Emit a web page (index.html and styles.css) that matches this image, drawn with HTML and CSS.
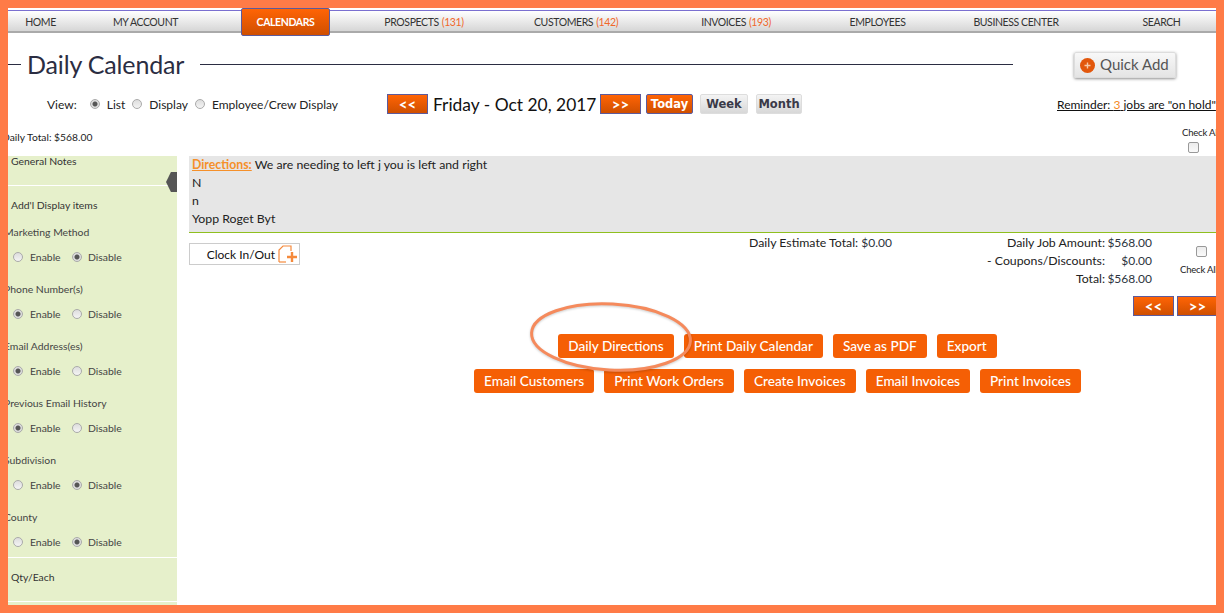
FILE: index.html
```html
<!DOCTYPE html>
<html lang="en">
<head>
    <meta charset="UTF-8">
    <title>Daily Calendar</title>
    <link rel="stylesheet" href="styles.css">
</head>
<body>
    <div class="frame">
        <div class="nav">
            <div class="nav-bar">
                <a class="nav-item">HOME</a>
                <a class="nav-item">MY ACCOUNT</a>
                <a class="nav-item nav-active"><span class="nav-tab">CALENDARS</span></a>
                <a class="nav-item">PROSPECTS <span class="count">(131)</span></a>
                <a class="nav-item">CUSTOMERS <span class="count">(142)</span></a>
                <a class="nav-item">INVOICES <span class="count">(193)</span></a>
                <a class="nav-item">EMPLOYEES</a>
                <a class="nav-item">BUSINESS CENTER</a>
                <a class="nav-item">SEARCH</a>
            </div>
        </div>

        <div class="title-row">
            <div class="title-dash"></div>
            <h1 class="title">Daily Calendar</h1>
            <div class="title-line"></div>
            <button class="quick-add">
                <svg class="quick-icon" width="15" height="15" viewBox="0 0 15 15">
                    <circle cx="7.5" cy="7.5" r="7.5" fill="#e2570c"/>
                    <path d="M7.5 4.5v6M4.5 7.5h6" stroke="#f5c9a8" stroke-width="1.4"/>
                </svg>
                Quick Add
            </button>
        </div>

        <div class="view-row">
            <div class="view-options">
                <span class="view-label">View:</span>
                <input type="radio" name="view" checked><label>List</label>
                <input type="radio" name="view"><label>Display</label>
                <input type="radio" name="view"><label>Employee/Crew Display</label>
            </div>
            <div class="date-nav">
                <button class="arrow-btn">&lt;&lt;</button>
                <span class="date">Friday - Oct 20, 2017</span>
                <button class="arrow-btn">&gt;&gt;</button>
                <button class="range-btn range-on">Today</button>
                <button class="range-btn">Week</button>
                <button class="range-btn">Month</button>
            </div>
            <a class="reminder">Reminder: <span class="hold-count">3</span> jobs are "on hold"</a>
        </div>

        <div class="total-row">
            <span class="daily-total">Daily Total: $568.00</span>
            <div class="check-all">
                <span>Check All</span>
                <input type="checkbox">
            </div>
        </div>

        <div class="page-body">
            <div class="sidebar">
                <div class="side-head">
                    General Notes
                    <span class="side-toggle"></span>
                </div>
                <div class="side-display">
                    <div class="side-title">Add'l Display items</div>
                    <div class="side-group">
                        <div class="side-label">Marketing Method</div>
                        <div class="side-radios">
                            <input type="radio" name="s1"><label>Enable</label>
                            <input type="radio" name="s1" checked><label>Disable</label>
                        </div>
                    </div>
                    <div class="side-group">
                        <div class="side-label">Phone Number(s)</div>
                        <div class="side-radios">
                            <input type="radio" name="s2" checked><label>Enable</label>
                            <input type="radio" name="s2"><label>Disable</label>
                        </div>
                    </div>
                    <div class="side-group">
                        <div class="side-label">Email Address(es)</div>
                        <div class="side-radios">
                            <input type="radio" name="s3" checked><label>Enable</label>
                            <input type="radio" name="s3"><label>Disable</label>
                        </div>
                    </div>
                    <div class="side-group">
                        <div class="side-label">Previous Email History</div>
                        <div class="side-radios">
                            <input type="radio" name="s4" checked><label>Enable</label>
                            <input type="radio" name="s4"><label>Disable</label>
                        </div>
                    </div>
                    <div class="side-group">
                        <div class="side-label">Subdivision</div>
                        <div class="side-radios">
                            <input type="radio" name="s5"><label>Enable</label>
                            <input type="radio" name="s5" checked><label>Disable</label>
                        </div>
                    </div>
                    <div class="side-group">
                        <div class="side-label">County</div>
                        <div class="side-radios">
                            <input type="radio" name="s6"><label>Enable</label>
                            <input type="radio" name="s6" checked><label>Disable</label>
                        </div>
                    </div>
                </div>
                <div class="side-qty">Qty/Each</div>
            </div>

            <div class="content">
                <div class="directions">
                    <div><a class="directions-link">Directions:</a> We are needing to left j you is left and right</div>
                    <div>N</div>
                    <div>n</div>
                    <div>Yopp Roget Byt</div>
                </div>

                <div class="summary">
                    <button class="clock-btn">
                        Clock In/Out
                        <svg width="20" height="18" viewBox="0 0 20 18" fill="none" stroke="#f58a3c">
                            <path d="M1 17V5l4-4h8v5" stroke-width="1.2"/>
                            <path d="M1 17h7" stroke-width="1.2"/>
                            <path d="M14 7v10M9 12h10" stroke-width="2.4"/>
                        </svg>
                    </button>
                    <div class="estimate">Daily Estimate Total: <span class="money">$0.00</span></div>
                    <div class="amounts">
                        <span>Daily Job Amount:</span><span class="money">$568.00</span>
                        <span>- Coupons/Discounts:</span><span class="money">$0.00</span>
                        <span>Total:</span><span class="money">$568.00</span>
                    </div>
                    <div class="check-all-lower">
                        <input type="checkbox">
                        <span>Check All</span>
                    </div>
                </div>

                <div class="pager">
                    <button class="arrow-btn">&lt;&lt;</button>
                    <button class="arrow-btn">&gt;&gt;</button>
                </div>

                <div class="actions">
                    <div class="action-row">
                        <button class="action-btn">Daily Directions</button>
                        <button class="action-btn">Print Daily Calendar</button>
                        <button class="action-btn">Save as PDF</button>
                        <button class="action-btn">Export</button>
                    </div>
                    <div class="action-row">
                        <button class="action-btn">Email Customers</button>
                        <button class="action-btn">Print Work Orders</button>
                        <button class="action-btn">Create Invoices</button>
                        <button class="action-btn">Email Invoices</button>
                        <button class="action-btn">Print Invoices</button>
                    </div>
                </div>
            </div>
        </div>

        <!-- hand drawn highlight over the screenshot -->
        <svg class="highlight" width="170" height="80" viewBox="0 0 170 80" fill="none">
            <ellipse cx="85" cy="39" rx="79.5" ry="33" transform="rotate(3 85 39)" stroke="#f58a5c" stroke-width="3"/>
        </svg>
    </div>
</body>
</html>
```

FILE: styles.css
```css
* {
    box-sizing: border-box;
}

body {
    margin: 0;
    padding: 0;
    font-family: Lato, "Open Sans", sans-serif;
    color: #222;
    background-color: #fff;
}

.frame {
    position: relative;
    width: 1224px;
    height: 613px;
    border: 8px solid #ff7b47;
    overflow: hidden;
    background-color: #fff;
}

button {
    font-family: inherit;
    cursor: pointer;
}

/* top nav */
.nav {
    height: 25px;
    padding-top: 2px;
}

.nav-bar {
    display: grid;
    grid-template-columns: 65px 145px 135px 142px 162px 158px 125px 152px 139px;
    height: 23px;
    border-top: 1px solid #7a6fd0;
    border-bottom: 2px solid #aaa;
    background: linear-gradient(#fff, #d6d6d6);
}

.nav-item {
    display: flex;
    align-items: center;
    justify-content: center;
    padding-top: 1px;
    font-size: 10.5px;
    letter-spacing: -0.4px;
    color: #333;
    white-space: nowrap;
}

.count {
    color: #f0672a;
    margin-left: 3px;
}

.nav-active {
    position: relative;
}

.nav-tab {
    position: absolute;
    top: -3px;
    left: 23px;
    width: 89px;
    height: 28px;
    display: flex;
    align-items: center;
    justify-content: center;
    font-weight: bold;
    color: #fff;
    background: linear-gradient(#ff6405, #cf4f00);
    border: 1px solid #5c5a9c;
    border-radius: 2px;
}

/* title */
.title-row {
    display: flex;
    align-items: center;
    height: 30px;
    margin-top: 16px;
}

.title-dash {
    width: 13px;
    height: 1px;
    background-color: #2b2d42;
}

.title {
    margin: 0 16px 0 6px;
    padding-bottom: 1px;
    font-size: 25px;
    font-weight: normal;
    color: #2b2d42;
    letter-spacing: -0.15px;
}

.title-line {
    flex: 1;
    height: 1px;
    background-color: #2b2d42;
}

.quick-add {
    display: flex;
    align-items: center;
    gap: 5px;
    width: 102px;
    height: 26px;
    margin: 2px 40px 0 61px;
    padding: 0 0 2px 5px;
    border: 1px solid #ddd;
    border-radius: 2px;
    font-size: 15px;
    color: #555;
    background: linear-gradient(#f8f8f8, #e4e4e4);
    box-shadow: 0 1px 3px rgba(0, 0, 0, 0.45);
}

.quick-icon {
    flex-shrink: 0;
    margin-top: 2px;
}

/* view + date */
.view-row {
    display: flex;
    align-items: center;
    height: 20px;
    margin-top: 15px;
    white-space: nowrap;
    font-size: 12px;
}

.view-options {
    display: flex;
    align-items: center;
    flex: 0 0 379px;
    padding-left: 39px;
    color: #222;
}

.view-label {
    margin-right: 13px;
}

.view-options label {
    margin: 0 7px 0 7px;
}

input[type="radio"] {
    appearance: none;
    width: 10px;
    height: 10px;
    margin: 0;
    flex-shrink: 0;
    border: 1px solid #aaa;
    border-radius: 50%;
    background: linear-gradient(#ddd, #f4f4f4);
}

input[type="radio"]:checked {
    background: radial-gradient(circle, #555 0 2px, #ddd 3px);
}

input[type="checkbox"] {
    appearance: none;
    display: block;
    width: 11px;
    height: 11px;
    margin: 0;
    border: 1px solid #999;
    border-radius: 2px;
    background: linear-gradient(#ececec, #fafafa);
}

.date-nav {
    display: flex;
    align-items: center;
    flex: 0 0 670px;
}

.arrow-btn {
    width: 41px;
    height: 20px;
    padding: 0 0 2px;
    border: 1px solid #5c5a9c;
    font-size: 15px;
    font-weight: bold;
    color: #fff;
    background: linear-gradient(#ff6405, #cf4f00);
}

.date {
    width: 162px;
    margin: 0 5px;
    font-size: 17.4px;
    color: #111;
}

.range-btn {
    width: 48px;
    height: 20px;
    margin-left: 7px;
    padding: 0;
    border: 1px solid #ddd;
    border-radius: 2px;
    font-family: "DejaVu Sans", sans-serif;
    font-size: 11.5px;
    font-weight: bold;
    color: #3a3a48;
    background: linear-gradient(#f4f4f4, #d8d8d8);
}

.range-btn:last-child {
    width: 46px;
    margin-left: 8px;
}

.range-on {
    width: 47px;
    margin-left: 5px;
    border-color: #5c5a9c;
    color: #fff;
    background: linear-gradient(#ff6405, #cf4f00);
}

.reminder {
    color: #111;
    text-decoration: underline;
}

.hold-count {
    color: #f58a1f;
}

/* total */
.total-row {
    display: flex;
    justify-content: space-between;
    height: 28px;
    margin-top: 14px;
    font-size: 10.3px;
}

.daily-total {
    margin-left: -6px;
    line-height: 18px;
}

.check-all {
    width: 34px;
    margin-top: -1px;
    font-size: 9.5px;
    letter-spacing: -0.2px;
    white-space: nowrap;
}

.check-all span {
    display: block;
    height: 13px;
}

.check-all input {
    margin: 2px 0 0 6px;
}

/* sidebar */
.page-body {
    display: flex;
    gap: 12px;
    height: 449px;
}

.sidebar {
    flex: 0 0 169px;
    overflow: hidden;
    background-color: #e6f0cb;
    font-size: 10.4px;
    color: #444;
}

.side-head {
    position: relative;
    height: 30px;
    padding-left: 3px;
    border-bottom: 1px solid #fff;
    color: #333;
    line-height: 11px;
    white-space: nowrap;
}

.side-toggle {
    position: absolute;
    right: 0;
    top: 16px;
    width: 11px;
    height: 20px;
    background-color: #555;
    clip-path: polygon(45% 0, 100% 0, 100% 100%, 45% 100%, 0 50%);
}

.side-display {
    height: 372px;
    border-bottom: 1px solid #fff;
}

.side-title {
    height: 28px;
    padding: 13px 0 0 3px;
    line-height: 12px;
    color: #333;
}

.side-group {
    height: 57px;
    padding-top: 12px;
}

.side-label {
    height: 13px;
    margin-left: -4px;
    line-height: 13px;
    white-space: nowrap;
}

.side-radios {
    display: flex;
    align-items: center;
    height: 14px;
    margin-top: 11px;
    padding-left: 5px;
}

.side-radios label {
    width: 42px;
    margin-left: 7px;
}

.side-radios label:last-child {
    width: auto;
    margin-left: 6px;
}

.side-qty {
    height: 44px;
    padding: 13px 0 0 3px;
    border-bottom: 1px solid #fff;
    color: #333;
}

/* main content */
.content {
    flex: 1;
    min-width: 0;
    font-size: 12.3px;
    white-space: nowrap;
}

.directions {
    height: 77px;
    padding: 0 3px;
    border-bottom: 1px solid #8fbf1f;
    background-color: #e6e6e6;
    line-height: 18px;
    color: #222;
}

.directions-link {
    font-weight: bold;
    color: #f5902a;
    text-decoration: underline;
}

.summary {
    position: relative;
    display: flex;
    height: 62px;
    margin-top: 1px;
    line-height: 18px;
}

.clock-btn {
    display: flex;
    align-items: center;
    justify-content: flex-end;
    gap: 3px;
    width: 111px;
    height: 22px;
    margin-top: 9px;
    padding: 0 1px 0 0;
    border: 1px solid #ccc;
    font-size: 12px;
    color: #111;
    background-color: #fff;
}

.estimate {
    margin-left: 449px;
}

.amounts {
    display: grid;
    grid-template-columns: auto 47px;
    align-content: start;
    margin-left: auto;
    margin-right: 64px;
    text-align: right;
}

.money {
    font-size: 12px;
    color: #2c3440;
}

.check-all-lower {
    position: absolute;
    top: 12px;
    right: -9px;
    width: 45px;
    font-size: 9.5px;
    letter-spacing: -0.2px;
}

.check-all-lower input {
    margin-left: 16px;
}

.check-all-lower span {
    display: block;
    margin-top: 7px;
    line-height: 12px;
}

.pager {
    display: flex;
    justify-content: flex-end;
    gap: 3px;
    margin-right: -2px;
}

.actions {
    display: flex;
    flex-direction: column;
    gap: 11px;
    margin-top: 18px;
    padding-left: 150px;
}

.action-row {
    display: flex;
    justify-content: center;
    gap: 10px;
}

.action-btn {
    height: 24px;
    padding: 0 10px;
    border: none;
    border-radius: 3px;
    font-size: 13.6px;
    font-weight: 500;
    color: #fff;
    background-color: #f55f05;
}

/* annotation on top */
.highlight {
    position: absolute;
    left: 518px;
    top: 290px;
    filter: drop-shadow(0 1px 1px rgba(0, 0, 0, 0.2));
}
```
